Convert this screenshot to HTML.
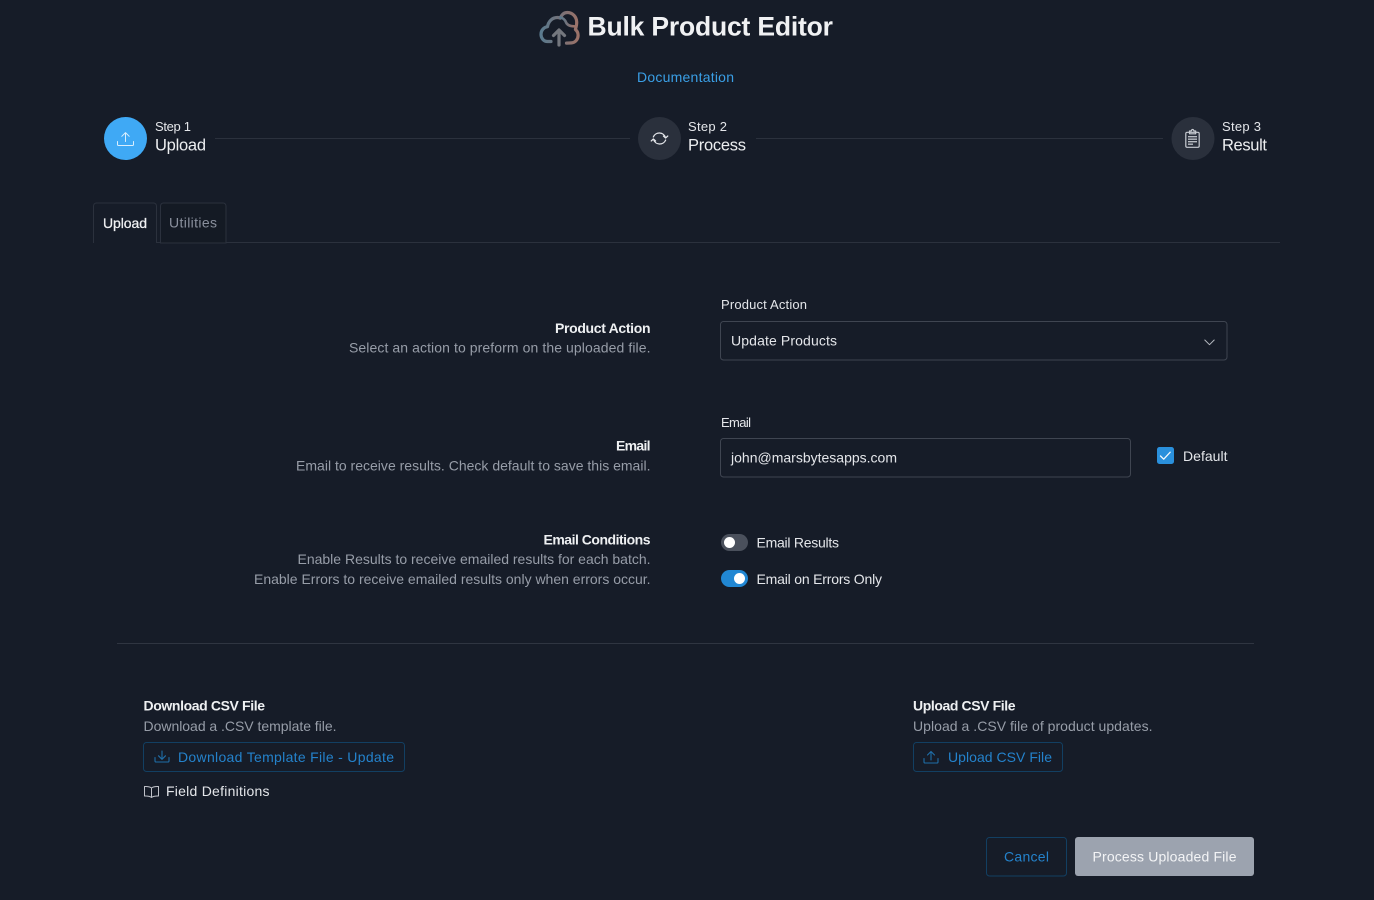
<!DOCTYPE html>
<html>
<head>
<meta charset="utf-8">
<style>
html,body{margin:0;padding:0;background:#161c28;width:1374px;height:900px;overflow:hidden}
svg{display:block;font-family:"Liberation Sans",sans-serif}
.n{font-size:14px;fill:#e4e6ea}
.m{font-size:14px;fill:#979da8}
.b{font-size:14px;font-weight:bold;fill:#eef0f2}
.p{font-size:14px;fill:#2482cb}
.s{font-size:13px;fill:#e4e6ea}
.l{font-size:16.5px;fill:#eceef0}
.i{fill:none;stroke-linecap:round;stroke-linejoin:round}
</style>
</head>
<body>
<svg width="1374" height="900" viewBox="0 0 1374 900" xmlns="http://www.w3.org/2000/svg">
<defs>
<linearGradient id="g" x1="0" y1="0" x2="1" y2="0">
<stop offset="0" stop-color="#5a7a8e"/><stop offset=".5" stop-color="#74727a"/><stop offset="1" stop-color="#9c7268"/>
</linearGradient>
</defs>
<rect width="1374" height="900" fill="#161c28"/>

<!-- logo -->
<g class="i" stroke="url(#g)" stroke-width="3.200">
<path d="M551 41.500h-3.500c-4 0-6.500-3.500-6.500-7.200 0-4 2.800-7 6.500-7.600 .8-5 4.500-9.200 9.800-9.200 1.200 0 2 .2 3 .6 1.200-3 3.600-5.600 7.200-5.600 5 0 9 4.200 9.200 9.500 .1 3-.6 5.200-1.300 7.500 1.800 1.600 2.700 3.600 2.700 5.700 0 4-2.600 7.300-6.500 7.700-1.800 .2-3.500 .2-5.100 .2"/>
<path d="M560.500 17.500c3.500 .8 4.800 2.900 5.600 5 .9 2.400 3 3.600 8 3.800" stroke-width="2.600"/>
</g>
<g class="i" stroke="#74777e" stroke-width="3.200">
<path d="M559 45V30.500"/><path d="M553.500 35.500l5.500-5.500 5.500 5.500"/>
</g>

<text x="587.500" y="35.500" font-size="26.500" font-weight="bold" fill="#f0f1f3" textLength="245.500" lengthAdjust="spacing">Bulk Product Editor</text>
<text x="637" y="82" font-size="14" fill="#3a9fe6" textLength="97" lengthAdjust="spacing">Documentation</text>

<!-- stepper -->
<path d="M215 138.500H630M756 138.500H1163" stroke="#2b313d" stroke-width="1"/>
<circle cx="125.500" cy="138.500" r="21.500" fill="#3fa9f5"/>
<circle cx="659.500" cy="138.500" r="21.500" fill="#2a303c"/>
<circle cx="1193" cy="138.500" r="21.500" fill="#2a303c"/>

<g class="i" stroke="#d9eefd" stroke-width="1">
<path d="M117.500 141.500v3c0 .6.400 1 1 1h14c.6 0 1-.4 1-1v-3"/>
<path d="M125.500 141.500v-8.500M121.800 136.300l3.700-3.700 3.700 3.700"/>
</g>
<g class="i" stroke="#e6e8ec" stroke-width="1.200">
<path d="M653.300 137A6.500 6.500 0 0 1 665.500 137.600"/>
<path d="M663.400 136l2.200 2 2.200-2"/>
<path d="M665.700 140A6.500 6.500 0 0 1 653.500 139.400"/>
<path d="M655.600 141l-2.200-2-2.200 2"/>
</g>
<g class="i" stroke="#c8ccd2" stroke-width="1.200">
<rect x="1185.800" y="132.300" width="13.400" height="15" rx="1.300"/>
<path d="M1189.500 132.300v-1.300h1.800c.2-1 .6-1.500 1.300-1.500s1.100.5 1.300 1.500h1.800v2.800h-6.200z"/>
</g>
<path d="M1188 136h9v1.400h-9zM1188 138.500h9v1.400h-9zM1188 141h9v1.400h-9zM1188 143.500h5v1.400h-5z" fill="#b9bdc4"/>

<text class="s" x="155" y="131" textLength="36" lengthAdjust="spacing">Step 1</text>
<text class="l" x="155" y="150.500" textLength="51" lengthAdjust="spacing">Upload</text>
<text class="s" x="688" y="131" textLength="39" lengthAdjust="spacing">Step 2</text>
<text class="l" x="688" y="150.500" textLength="58" lengthAdjust="spacing">Process</text>
<text class="s" x="1222" y="131" textLength="39" lengthAdjust="spacing">Step 3</text>
<text class="l" x="1222" y="150.500" textLength="45" lengthAdjust="spacing">Result</text>

<!-- tabs -->
<path d="M93 242.500H1280" stroke="#2b313d"/>
<path d="M160.500 243V206c0-1.700 1.300-3 3-3H223c1.700 0 3 1.300 3 3v37z" fill="#141a24" stroke="#2b313d"/>
<path d="M93.500 243V206c0-1.700 1.300-3 3-3h57c1.700 0 3 1.300 3 3v37" fill="#161c28" stroke="#2b313d"/>
<rect x="94" y="241.500" width="62" height="2" fill="#161c28"/>
<text x="103" y="228" font-size="14" fill="#f0f1f3" stroke="#f0f1f3" stroke-width=".25" textLength="44" lengthAdjust="spacing">Upload</text>
<text x="169" y="227.500" font-size="14" fill="#8a909d" textLength="48" lengthAdjust="spacing">Utilities</text>

<!-- left descriptions -->
<text class="b" x="555" y="333" textLength="95.500" lengthAdjust="spacing">Product Action</text>
<text class="m" x="349" y="352.500" textLength="301.500" lengthAdjust="spacing">Select an action to preform on the uploaded file.</text>
<text class="b" x="616" y="450.500" textLength="34.500" lengthAdjust="spacing">Email</text>
<text class="m" x="296" y="470.500" textLength="354.500" lengthAdjust="spacing">Email to receive results. Check default to save this email.</text>
<text class="b" x="543.500" y="544.500" textLength="107" lengthAdjust="spacing">Email Conditions</text>
<text class="m" x="297.500" y="564" textLength="353" lengthAdjust="spacing">Enable Results to receive emailed results for each batch.</text>
<text class="m" x="254" y="584" textLength="396.500" lengthAdjust="spacing">Enable Errors to receive emailed results only when errors occur.</text>

<!-- form -->
<text class="s" x="721" y="309" textLength="86" lengthAdjust="spacing">Product Action</text>
<rect x="720.500" y="321.500" width="506.500" height="38.500" rx="3" fill="none" stroke="#3f4551"/>
<text class="n" x="731" y="345.500" textLength="106" lengthAdjust="spacing">Update Products</text>
<path class="i" d="M1204.800 340l4.700 4.700 4.700-4.700" stroke="#b5b9c0" stroke-width="1"/>

<text class="s" x="721" y="427" textLength="30" lengthAdjust="spacing">Email</text>
<rect x="720.500" y="438.500" width="410" height="38.500" rx="3" fill="none" stroke="#3f4551"/>
<text class="n" x="731" y="462.500" textLength="166" lengthAdjust="spacing">john@marsbytesapps.com</text>
<rect x="1157" y="447" width="17" height="17" rx="2.500" fill="#2a90dc"/>
<path class="i" d="M1160.500 456l3.200 3.200 6.500-7" stroke="#f3f8fc" stroke-width="1.300"/>
<text class="n" x="1183" y="461" textLength="44.500" lengthAdjust="spacing">Default</text>

<rect x="721" y="534" width="27" height="17" rx="8.500" fill="#4a505c"/>
<circle cx="729.500" cy="542.500" r="5.500" fill="#fff"/>
<text class="n" x="756.500" y="547.500" textLength="82.500" lengthAdjust="spacing">Email Results</text>
<rect x="721" y="570" width="27" height="17" rx="8.500" fill="#2187d3"/>
<circle cx="739.500" cy="578.500" r="5.500" fill="#fff"/>
<text class="n" x="756.500" y="584" textLength="125.500" lengthAdjust="spacing">Email on Errors Only</text>

<path d="M117 643.500H1254" stroke="#2f3541"/>

<!-- download -->
<text class="b" x="143.500" y="710.500" textLength="121.500" lengthAdjust="spacing">Download CSV File</text>
<text class="m" x="143.500" y="731" textLength="193" lengthAdjust="spacing">Download a .CSV template file.</text>
<rect x="143.500" y="742.500" width="261" height="29" rx="3" fill="none" stroke="#123f62"/>
<g class="i" stroke="#1f6ea8" stroke-width="1.100">
<path d="M155 757.500v3.500c0 .6.400 1 1 1h12c.6 0 1-.4 1-1v-3.500"/>
<path d="M162 751v8M158.500 755.800l3.500 3.500 3.500-3.500"/>
</g>
<text class="p" x="178" y="762" textLength="216" lengthAdjust="spacing">Download Template File - Update</text>
<g class="i" stroke="#c0c3ca" stroke-width="1">
<path d="M151.500 788c-1.500-1.200-3.500-1.700-7-1.500v9.500c3.500-.2 5.500.3 7 1.500 1.500-1.200 3.500-1.700 7-1.500v-9.500c-3.500-.2-5.500.3-7 1.500zM151.500 788v9.500"/>
</g>
<text class="n" x="166" y="796" textLength="103.500" lengthAdjust="spacing">Field Definitions</text>

<!-- upload -->
<text class="b" x="913" y="710.500" textLength="102.500" lengthAdjust="spacing">Upload CSV File</text>
<text class="m" x="913" y="731" textLength="239.500" lengthAdjust="spacing">Upload a .CSV file of product updates.</text>
<rect x="913.500" y="742.500" width="149" height="29" rx="3" fill="none" stroke="#123f62"/>
<g class="i" stroke="#1f6ea8" stroke-width="1.100">
<path d="M924 758.500v3.500c0 .6.400 1 1 1h12c.6 0 1-.4 1-1v-3.500"/>
<path d="M931 760v-8.500M927.500 755l3.500-3.500 3.500 3.500"/>
</g>
<text class="p" x="948" y="762" textLength="104" lengthAdjust="spacing">Upload CSV File</text>

<!-- actions -->
<rect x="986.500" y="837.500" width="80" height="38.500" rx="3" fill="none" stroke="#123f62"/>
<text class="p" x="1004" y="861.500" textLength="45" lengthAdjust="spacing">Cancel</text>
<rect x="1075" y="837" width="179" height="39" rx="3" fill="#9ca3af"/>
<text x="1092.500" y="861.500" font-size="14" fill="#f3f4f6" textLength="144" lengthAdjust="spacing">Process Uploaded File</text>
</svg>
</body>
</html>
